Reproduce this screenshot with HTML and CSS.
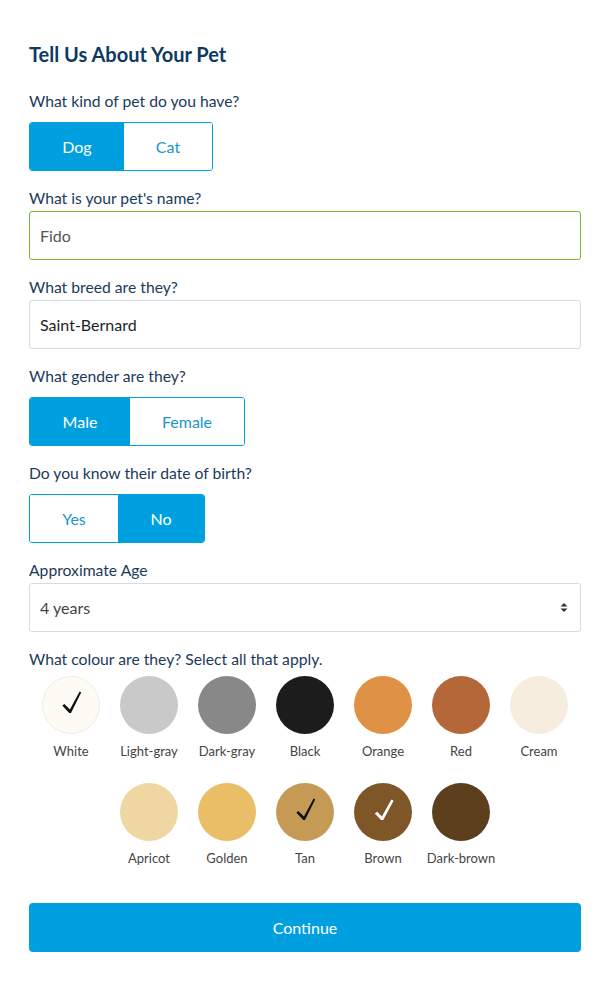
FILE: index.html
```html
<!DOCTYPE html>
<html>
<head>
<meta charset="utf-8">
<link rel="stylesheet" href="styles.css">
</head>
<body>
<div class="form">
  <h1 class="title">Tell Us About Your Pet</h1>

  <div class="field">
    <div class="label">What kind of pet do you have?</div>
    <div class="toggle">
      <div class="opt active w-dog">Dog</div>
      <div class="opt w-cat">Cat</div>
    </div>
  </div>

  <div class="field">
    <div class="label">What is your pet's name?</div>
    <div class="input valid">Fido</div>
  </div>

  <div class="field">
    <div class="label">What breed are they?</div>
    <div class="input dark">Saint-Bernard</div>
  </div>

  <div class="field">
    <div class="label">What gender are they?</div>
    <div class="toggle">
      <div class="opt active w-male">Male</div>
      <div class="opt w-female">Female</div>
    </div>
  </div>

  <div class="field">
    <div class="label">Do you know their date of birth?</div>
    <div class="toggle">
      <div class="opt w-yes">Yes</div>
      <div class="opt active w-no">No</div>
    </div>
  </div>

  <div class="field">
    <div class="label">Approximate Age</div>
    <div class="input select">
      <span>4 years</span>
      <svg class="arrows" width="8" height="11" viewBox="0 0 8 11"><path d="M4 1 L7.5 4.5 L0.5 4.5 Z M4 10 L7.5 6.5 L0.5 6.5 Z" fill="#333"/></svg>
    </div>
  </div>

  <div class="field">
    <div class="label">What colour are they? Select all that apply.</div>
    <div class="swatches">
      <div class="swatch"><div class="dot c-white"><svg class="check" viewBox="0 0 58 58"><path d="M20.3 29.6 L22.4 27.9 L27.9 33.4 L37.6 15.6 L39.2 16.4 L29 37 L27.2 37 Z"/></svg></div><div class="name">White</div></div>
      <div class="swatch"><div class="dot c-lgray"></div><div class="name">Light-gray</div></div>
      <div class="swatch"><div class="dot c-dgray"></div><div class="name">Dark-gray</div></div>
      <div class="swatch"><div class="dot c-black"></div><div class="name">Black</div></div>
      <div class="swatch"><div class="dot c-orange"></div><div class="name">Orange</div></div>
      <div class="swatch"><div class="dot c-red"></div><div class="name">Red</div></div>
      <div class="swatch"><div class="dot c-cream"></div><div class="name">Cream</div></div>
      <div class="swatch"><div class="dot c-apricot"></div><div class="name">Apricot</div></div>
      <div class="swatch"><div class="dot c-golden"></div><div class="name">Golden</div></div>
      <div class="swatch"><div class="dot c-tan"><svg class="check" viewBox="0 0 58 58"><path d="M20.3 29.6 L22.4 27.9 L27.9 33.4 L37.6 15.6 L39.2 16.4 L29 37 L27.2 37 Z"/></svg></div><div class="name">Tan</div></div>
      <div class="swatch"><div class="dot c-brown light"><svg class="check" viewBox="0 0 58 58"><path d="M20.8 30.6 L23.2 28.8 L27.9 33.6 L37.3 16.6 L39.6 17.8 L29.3 37 L27 37 Z"/></svg></div><div class="name">Brown</div></div>
      <div class="swatch"><div class="dot c-dbrown"></div><div class="name">Dark-brown</div></div>
    </div>
  </div>

  <div class="continue">Continue</div>
</div>
</body>
</html>
```

FILE: styles.css
```css
* { box-sizing: border-box; }
body {
  margin: 0;
  background: #fff;
  font-family: Lato, "Open Sans", sans-serif;
}
.form {
  width: 552px;
  margin-left: 29px;
  padding-top: 40px;
}
.title {
  margin: 0 0 23px;
  font-size: 20px;
  line-height: 28px;
  font-weight: 700;
  color: #0e3a62;
}
.field {
  margin-bottom: 17px;
}
.label {
  font-size: 15.7px;
  line-height: 20px;
  color: #1b3a5a;
  margin-bottom: 3px;
}
.toggle {
  display: inline-flex;
  margin-top: 8px;
  border: 1px solid #009fdf;
  border-radius: 3px;
  overflow: hidden;
  height: 49px;
}
.opt {
  display: flex;
  align-items: center;
  justify-content: center;
  font-size: 16px;
  color: #1a96d0;
  background: #fff;
}
.opt.active {
  background: #009fdf;
  color: #fff;
}
.w-dog { width: 94px; }
.w-cat { width: 88px; }
.w-male { width: 100px; }
.w-female { width: 114px; }
.w-yes { width: 88px; }
.w-no { width: 86px; }
.input {
  height: 49px;
  border: 1px solid #d3dde5;
  border-radius: 3px;
  padding: 0 10px;
  display: flex;
  align-items: center;
  font-size: 16px;
  color: #555;
}
.input.valid { border-color: #7bb52f; }
.input.dark { color: #1e1e1e; }
.input.select {
  justify-content: space-between;
  color: #444;
  padding-right: 12px;
}
.arrows { display: block; }
.swatches {
  display: flex;
  flex-wrap: wrap;
  justify-content: center;
  padding-top: 4px;
  row-gap: 23px;
}
.swatch {
  width: 78px;
  display: flex;
  flex-direction: column;
  align-items: center;
}
.dot {
  width: 58px;
  height: 58px;
  border-radius: 50%;
  color: #111;
}
.dot.light { color: #fff; }
.check {
  display: block;
  width: 58px;
  height: 58px;
  fill: currentColor;
}
.c-white .check { margin: -1px; }
.name {
  margin-top: 8px;
  font-size: 13px;
  line-height: 18px;
  color: #444;
}
.c-white { background: #fefbf4; border: 1px solid #f1ede6; }
.c-lgray { background: #c9c9c9; }
.c-dgray { background: #888888; }
.c-black { background: #1c1c1c; }
.c-orange { background: #df9145; }
.c-red { background: #b4683a; }
.c-cream { background: #f6eddf; }
.c-apricot { background: #efd7a3; }
.c-golden { background: #e9be66; }
.c-tan { background: #c49a55; }
.c-brown { background: #7e5627; }
.c-dbrown { background: #5c401e; }
.continue {
  margin-top: 36px;
  height: 49px;
  border-radius: 4px;
  background: #009fdf;
  color: #fff;
  font-size: 16px;
  display: flex;
  align-items: center;
  justify-content: center;
}
```
